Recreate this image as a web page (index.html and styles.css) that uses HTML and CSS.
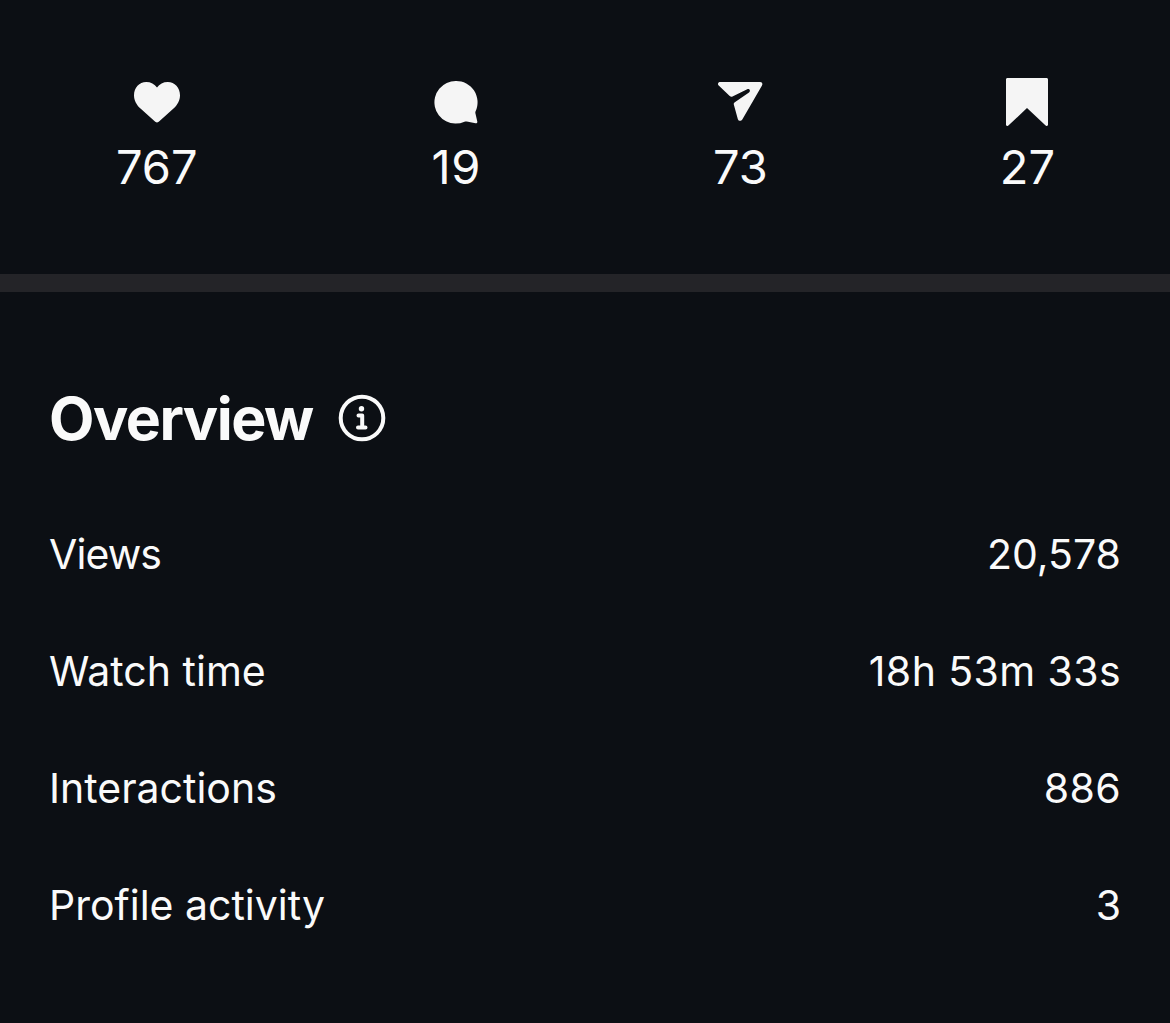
FILE: index.html
```html
<!DOCTYPE html>
<html lang="en">
<head>
  <meta charset="utf-8">
  <title>Insights</title>
  <link rel="stylesheet" href="styles.css">
</head>
<body>

<div class="stats">
  <div class="stat">
    <svg class="icon" viewBox="0 0 48 48"><path d="M24 44.500c-1 0-1.800-.7-2.600-1.400L7.500 30.500C3.500 26.800 1 22.500 1 17.200 1 9.800 6.300 4 13.200 4c4.500 0 8.400 2 10.800 5.600C26.400 6 30.300 4 34.800 4 41.700 4 47 9.800 47 17.200c0 5.300-2.500 9.600-6.500 13.300L26.600 43.100c-.8.700-1.600 1.400-2.600 1.400z"/></svg>
    <span>767</span>
  </div>
  <div class="stat comments">
    <svg class="icon" viewBox="0 0 48 48"><path d="M24 3a21.300 21.300 0 1 0 8.500 40.700c.8-.3 1.500-.3 2.300-.1l8.700 1.700c1.300.200 2-.6 1.800-1.800l-1.900-8.200c-.2-.9 0-1.500.3-2.300A21.300 21.300 0 0 0 24 3z"/></svg>
    <span>19</span>
  </div>
  <div class="stat">
    <svg class="icon" viewBox="0 0 48 48"><path d="M4.200 4H44c2 0 3 1.700 2 3.400L26.300 41.500c-1.200 2-4 1.600-4.500-.600L17.800 26.500c-.2-1 .2-1.700 1-2.300L33 14.400c2-1.400.4-4.200-1.800-3.200L16.500 18.600c-1 .5-2 .3-2.800-.5L2.700 7.600C1.300 6 2.200 4 4.200 4z"/></svg>
    <span>73</span>
  </div>
  <div class="stat">
    <svg class="icon" viewBox="0 0 48 48"><path d="M4.500 0h39c.9 0 1.500.6 1.500 1.500v45c0 1.400-1.300 2-2.400 1.100L24 30 5.400 47.600C4.300 48.500 3 47.900 3 46.500v-45C3 .6 3.600 0 4.500 0z"/></svg>
    <span>27</span>
  </div>
</div>

<div class="overview">
  <div class="heading">
    <h2>Overview</h2>
    <svg class="info" viewBox="0 0 48 48">
      <circle class="ring" cx="24" cy="24" r="21.300"/>
      <circle cx="23.500" cy="14.700" r="2.700"/>
      <path class="stem" d="M20.500 21.500H24.200V33.500M20 33.500H27.500"/>
    </svg>
  </div>
  <div class="row"><span class="tight">Views</span><span>20,578</span></div>
  <div class="row"><span>Watch time</span><span class="wide">18h 53m 33s</span></div>
  <div class="row"><span>Interactions</span><span class="wide">886</span></div>
  <div class="row"><span>Profile activity</span><span>3</span></div>
</div>

</body>
</html>
```
FILE: styles.css
```css
* { box-sizing: border-box; }
body { margin: 0; height: 1023px; background: #0c0f14; color: #fafafa; font-family: Inter, sans-serif; overflow: hidden; }

.stats { display: flex; justify-content: space-around; height: 292px; margin-right: -1px; padding-top: 78px; border-bottom: 18px solid #242428; }
.stat { display: flex; flex-direction: column; align-items: center; gap: 11px; font-size: 47px; line-height: 60px; }
.comments { margin-left: 2px; letter-spacing: 0.5px; }
.icon { width: 48px; height: 48px; fill: #f5f5f5; }

.overview { padding: 89px 49px 0; }
.heading { display: flex; align-items: center; gap: 25px; height: 74px; margin-bottom: 41px; }
.heading h2 { margin: 0; font-size: 59px; font-weight: 700; letter-spacing: -1.5px; }
.info { width: 48px; height: 48px; fill: #fafafa; }
.ring { fill: none; stroke: #fafafa; stroke-width: 4; }
.stem { fill: none; stroke: #fafafa; stroke-width: 4; stroke-linecap: round; stroke-linejoin: round; }
.row { display: flex; justify-content: space-between; font-size: 41px; line-height: 117px; }
.tight { letter-spacing: -0.9px; }
.wide { letter-spacing: 0.4px; }
```
